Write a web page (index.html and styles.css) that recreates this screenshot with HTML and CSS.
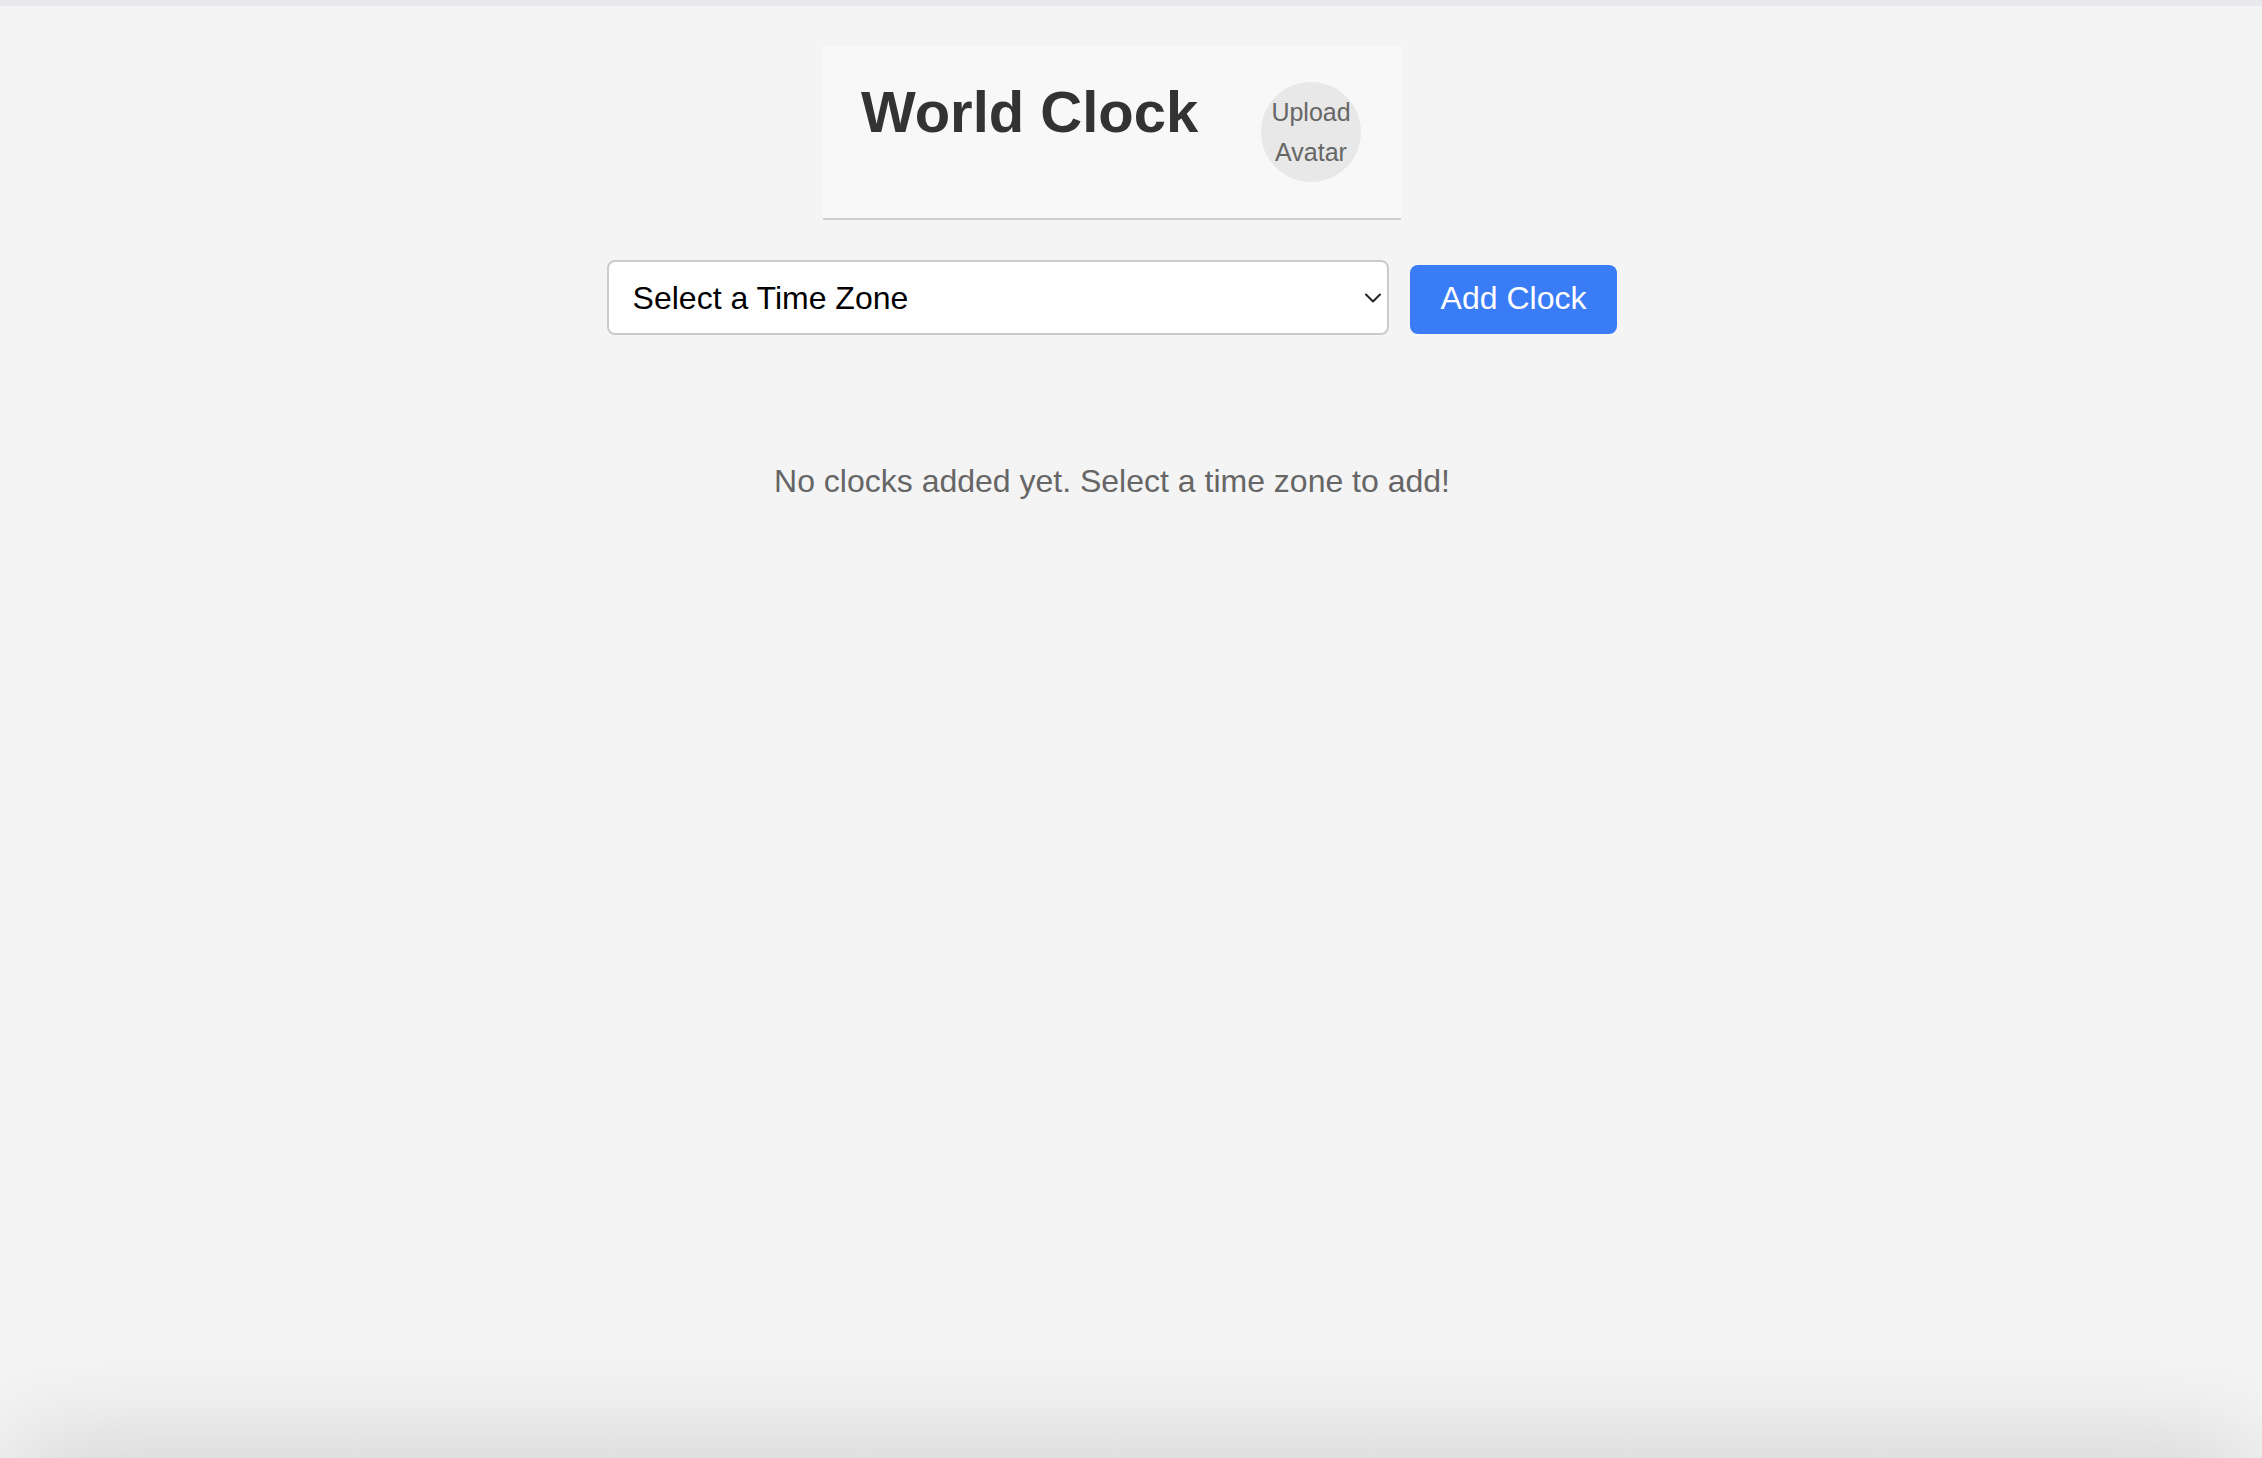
FILE: index.html
```html
<!DOCTYPE html>
<html lang="en">
<head>
<meta charset="utf-8">
<title>World Clock</title>
<link rel="stylesheet" href="styles.css">
</head>
<body>
<div class="topbar"></div>
<main class="app">
  <header class="card">
    <h1 class="title">World Clock</h1>
    <label class="avatar">Upload<br>Avatar</label>
  </header>
  <div class="controls">
    <div class="select-wrap">
      <select class="tz">
        <option>Select a Time Zone</option>
      </select>
      <svg class="chev" width="16" height="10" viewBox="0 0 16 10" aria-hidden="true"><path d="M1 1.5 L8 8.5 L15 1.5" fill="none" stroke="#222" stroke-width="2" stroke-linecap="round" stroke-linejoin="round"/></svg>
    </div>
    <button class="add" type="button">Add Clock</button>
  </div>
  <p class="empty">No clocks added yet. Select a time zone to add!</p>
</main>
<div class="shade"></div>
</body>
</html>
```

FILE: styles.css
```css
html, body {
  margin: 0;
  padding: 0;
  height: 100%;
}

body {
  background: #f4f4f4;
  font-family: "Liberation Sans", Arial, Helvetica, sans-serif;
  color: #333;
  overflow: hidden;
}

.topbar {
  height: 6px;
  background: #e9e9ed;
}

.app {
  display: flex;
  flex-direction: column;
  align-items: center;
  padding-right: 38px;
}

.card {
  box-sizing: border-box;
  width: 578px;
  margin-top: 40px;
  padding: 35px 40px 36px 38px;
  background: #f8f8f8;
  border-bottom: 2px solid #cdcdcd;
  display: flex;
  justify-content: space-between;
  align-items: flex-start;
}

.title {
  margin: -3px 0 0;
  font-size: 58px;
  font-weight: bold;
  line-height: normal;
  color: #333;
}

.avatar {
  width: 100px;
  height: 100px;
  margin-top: 1px;
  border-radius: 50%;
  background: #e8e8e8;
  color: #666;
  font-size: 25px;
  line-height: 40px;
  text-align: center;
  display: flex;
  align-items: center;
  justify-content: center;
}

.controls {
  margin-top: 40px;
  display: flex;
  align-items: center;
  gap: 21px;
}

.select-wrap {
  position: relative;
}

.tz {
  box-sizing: border-box;
  width: 782px;
  height: 75px;
  padding: 0 40px 0 24px;
  border: 2px solid #cbcbcb;
  border-radius: 8px;
  background: #fff;
  color: #000;
  font-family: "Liberation Sans", Arial, Helvetica, sans-serif;
  font-size: 32px;
  -webkit-appearance: none;
  appearance: none;
  outline: none;
  display: block;
}

.chev {
  position: absolute;
  right: 8px;
  top: 33px;
  pointer-events: none;
}

.add {
  box-sizing: border-box;
  height: 69px;
  margin-top: 3px;
  padding: 0 31px 2px;
  border: none;
  border-radius: 8px;
  background: #3a7cf6;
  color: #fff;
  font-family: "Liberation Sans", Arial, Helvetica, sans-serif;
  font-size: 32px;
  line-height: normal;
  cursor: pointer;
}

.empty {
  margin: 128px 0 0;
  font-size: 32px;
  line-height: normal;
  color: #666;
}

.shade {
  position: fixed;
  left: 12px;
  right: 12px;
  top: 100%;
  height: 60px;
  box-shadow: 0 0 110px 0 rgba(0, 0, 0, 0.22);
  pointer-events: none;
}
```
